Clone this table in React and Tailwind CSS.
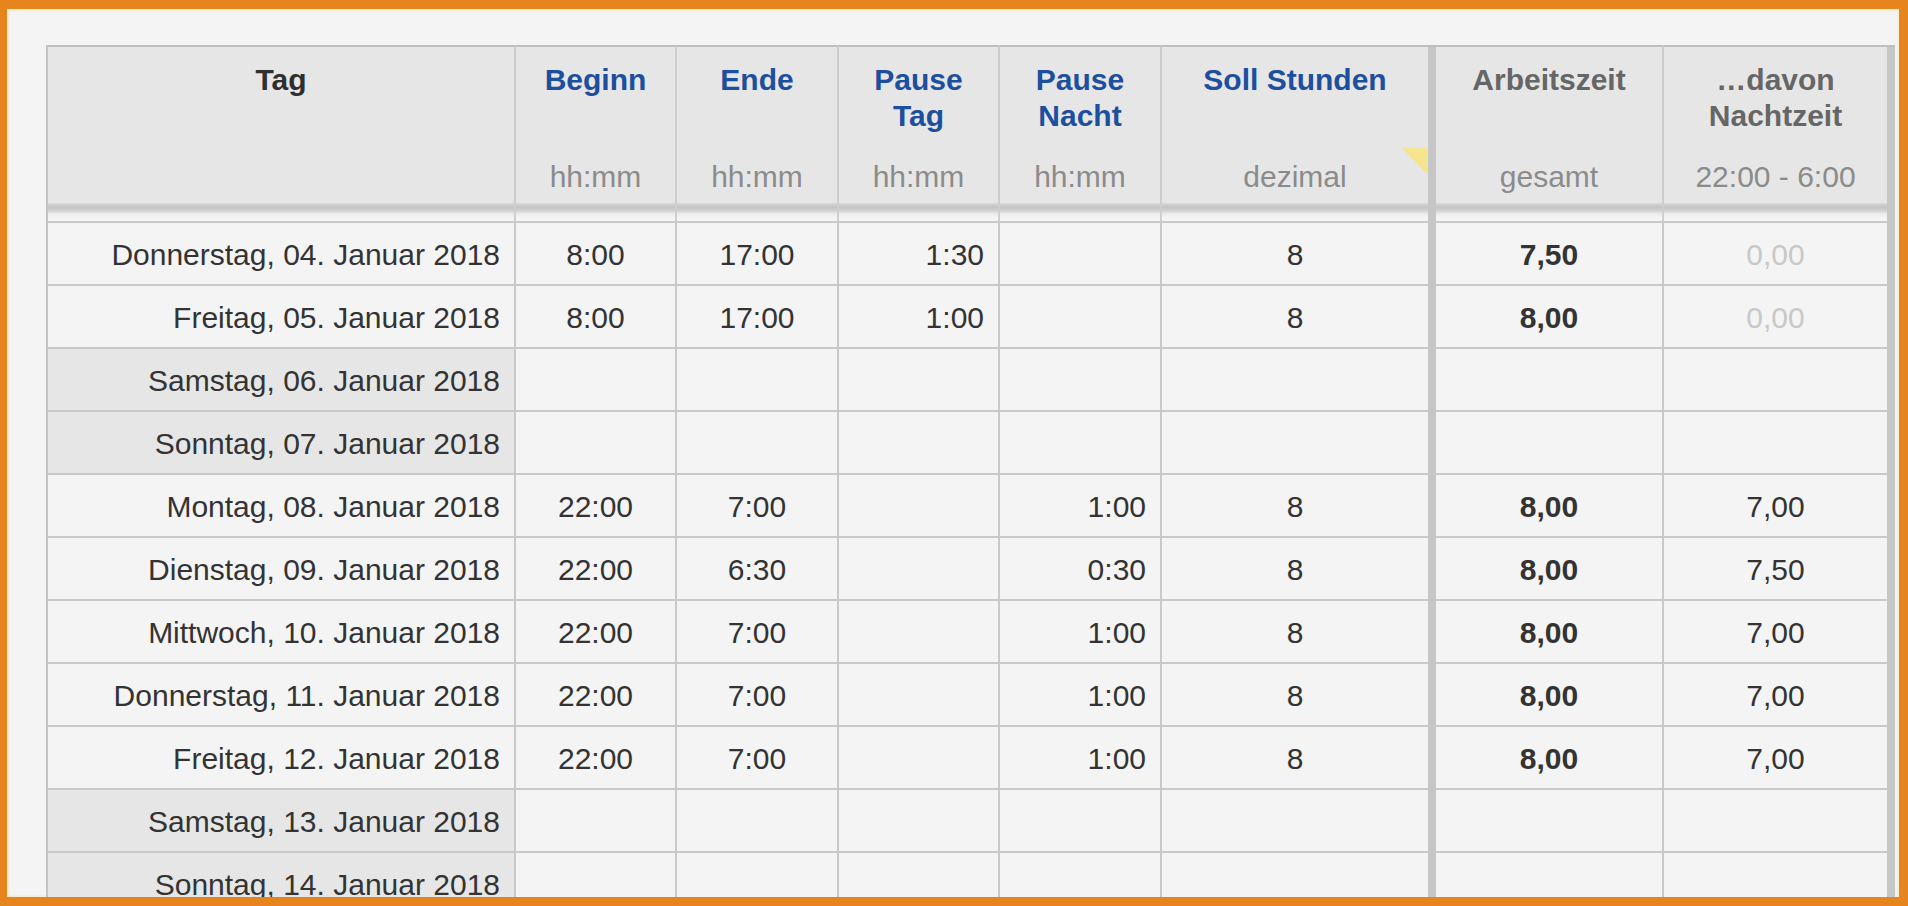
import React from "react";

const COLS =
  "grid grid-cols-[468px_161px_162px_161px_162px_266px_8px_228px_223px_8px]";

const rows = [
  { tag: "Donnerstag, 04. Januar 2018", beginn: "8:00", ende: "17:00", pTag: "1:30", pNacht: "", soll: "8", arbeit: "7,50", nacht: "0,00", leer: true },
  { tag: "Freitag, 05. Januar 2018", beginn: "8:00", ende: "17:00", pTag: "1:00", pNacht: "", soll: "8", arbeit: "8,00", nacht: "0,00", leer: true },
  { tag: "Samstag, 06. Januar 2018", weekend: true },
  { tag: "Sonntag, 07. Januar 2018", weekend: true },
  { tag: "Montag, 08. Januar 2018", beginn: "22:00", ende: "7:00", pTag: "", pNacht: "1:00", soll: "8", arbeit: "8,00", nacht: "7,00" },
  { tag: "Dienstag, 09. Januar 2018", beginn: "22:00", ende: "6:30", pTag: "", pNacht: "0:30", soll: "8", arbeit: "8,00", nacht: "7,50" },
  { tag: "Mittwoch, 10. Januar 2018", beginn: "22:00", ende: "7:00", pTag: "", pNacht: "1:00", soll: "8", arbeit: "8,00", nacht: "7,00" },
  { tag: "Donnerstag, 11. Januar 2018", beginn: "22:00", ende: "7:00", pTag: "", pNacht: "1:00", soll: "8", arbeit: "8,00", nacht: "7,00" },
  { tag: "Freitag, 12. Januar 2018", beginn: "22:00", ende: "7:00", pTag: "", pNacht: "1:00", soll: "8", arbeit: "8,00", nacht: "7,00" },
  { tag: "Samstag, 13. Januar 2018", weekend: true },
  { tag: "Sonntag, 14. Januar 2018", weekend: true },
];

const HeadCell = ({ title, sub, color, last, children }) => (
  <div
    className={`relative h-[158px] border-t-2 border-t-[#bebebe] ${
      last ? "" : "border-r-2 border-r-[#cdcdcd]"
    } bg-[#e6e6e6] flex flex-col items-center justify-between pt-[15px] pb-[8px] text-center`}
  >
    <div className={`font-bold leading-[36px] ${color}`}>{title}</div>
    <div className="leading-[36px] text-[#8b8b8b]">{sub}</div>
    {children}
  </div>
);

const Bar = ({ head, right }) => (
  <div
    className={`${head ? "border-t-2 border-t-[#bebebe]" : ""} ${
      right ? "bg-[#c5c9c5]" : "bg-[#c6c6c6]"
    }`}
  />
);

const GapCell = ({ last }) => (
  <div
    className={`h-[18px] ${
      last ? "" : "border-r-2 border-r-[#cfcfcf]"
    } bg-[linear-gradient(to_bottom,#dadada_0px,#c4c4c4_4px,#d3d3d3_8px,#eeeeee_11px,#f4f4f4_16px)]`}
  />
);

const Cell = ({ children, align = "center", last, grey, className = "" }) => (
  <div
    className={`h-[63px] border-t-2 border-t-[#c9c9c9] ${
      last ? "" : "border-r-2 border-r-[#c9c9c9]"
    } ${grey ? "bg-[#e6e6e6]" : "bg-[#f4f4f4]"} flex items-center pt-[2px] ${
      align === "right" ? "justify-end pr-[14px]" : "justify-center"
    } ${className}`}
  >
    {children}
  </div>
);

export default function App() {
  return (
    <div className="w-[1908px] h-[906px] border-t-[9px] border-b-[9px] border-l-[7px] border-r-[9px] border-[#e6841d] bg-[#f4f4f4] overflow-hidden">
      <div
        className="h-full w-full pl-[39px] pt-[36px] shadow-[inset_0_0_0_2px_#faedd3] text-[30px] text-[#333333]"
        style={{ fontFamily: '"Liberation Sans", Arial, sans-serif' }}
      >
        <div className="w-[1849px] border-l-2 border-l-[#c4c4c4]">
          {/* header */}
          <div className={COLS}>
            <HeadCell title="Tag" sub="" color="text-[#2f2f2f]" />
            <HeadCell title="Beginn" sub="hh:mm" color="text-[#1d4f9f]" />
            <HeadCell title="Ende" sub="hh:mm" color="text-[#1d4f9f]" />
            <HeadCell
              title={<>Pause<br />Tag</>}
              sub="hh:mm"
              color="text-[#1d4f9f]"
            />
            <HeadCell
              title={<>Pause<br />Nacht</>}
              sub="hh:mm"
              color="text-[#1d4f9f]"
            />
            <HeadCell title="Soll Stunden" sub="dezimal" color="text-[#1d4f9f]" last>
              <div className="absolute right-0 top-[100px] w-[27px] h-[28px] bg-[#f6e58e] blur-[1px] [clip-path:polygon(0_0,100%_0,100%_100%)]" />
            </HeadCell>
            <Bar head />
            <HeadCell title="Arbeitszeit" sub="gesamt" color="text-[#666666]" />
            <HeadCell
              title={<>…davon<br />Nachtzeit</>}
              sub="22:00 - 6:00"
              color="text-[#666666]"
              last
            />
            <Bar head right />
          </div>

          {/* shadow gap under the fixed header */}
          <div className={COLS}>
            <GapCell />
            <GapCell />
            <GapCell />
            <GapCell />
            <GapCell />
            <GapCell last />
            <Bar />
            <GapCell />
            <GapCell last />
            <Bar right />
          </div>

          {rows.map((r) => (
            <div key={r.tag} className={COLS}>
              <Cell align="right" grey={r.weekend}>
                {r.tag}
              </Cell>
              <Cell>{r.beginn}</Cell>
              <Cell>{r.ende}</Cell>
              <Cell align="right">{r.pTag}</Cell>
              <Cell align="right">{r.pNacht}</Cell>
              <Cell last>{r.soll}</Cell>
              <Bar />
              <Cell className="font-bold">{r.arbeit}</Cell>
              <Cell last className={r.leer ? "text-[#c8c8c8]" : ""}>
                {r.nacht}
              </Cell>
              <Bar right />
            </div>
          ))}
        </div>
      </div>
    </div>
  );
}
